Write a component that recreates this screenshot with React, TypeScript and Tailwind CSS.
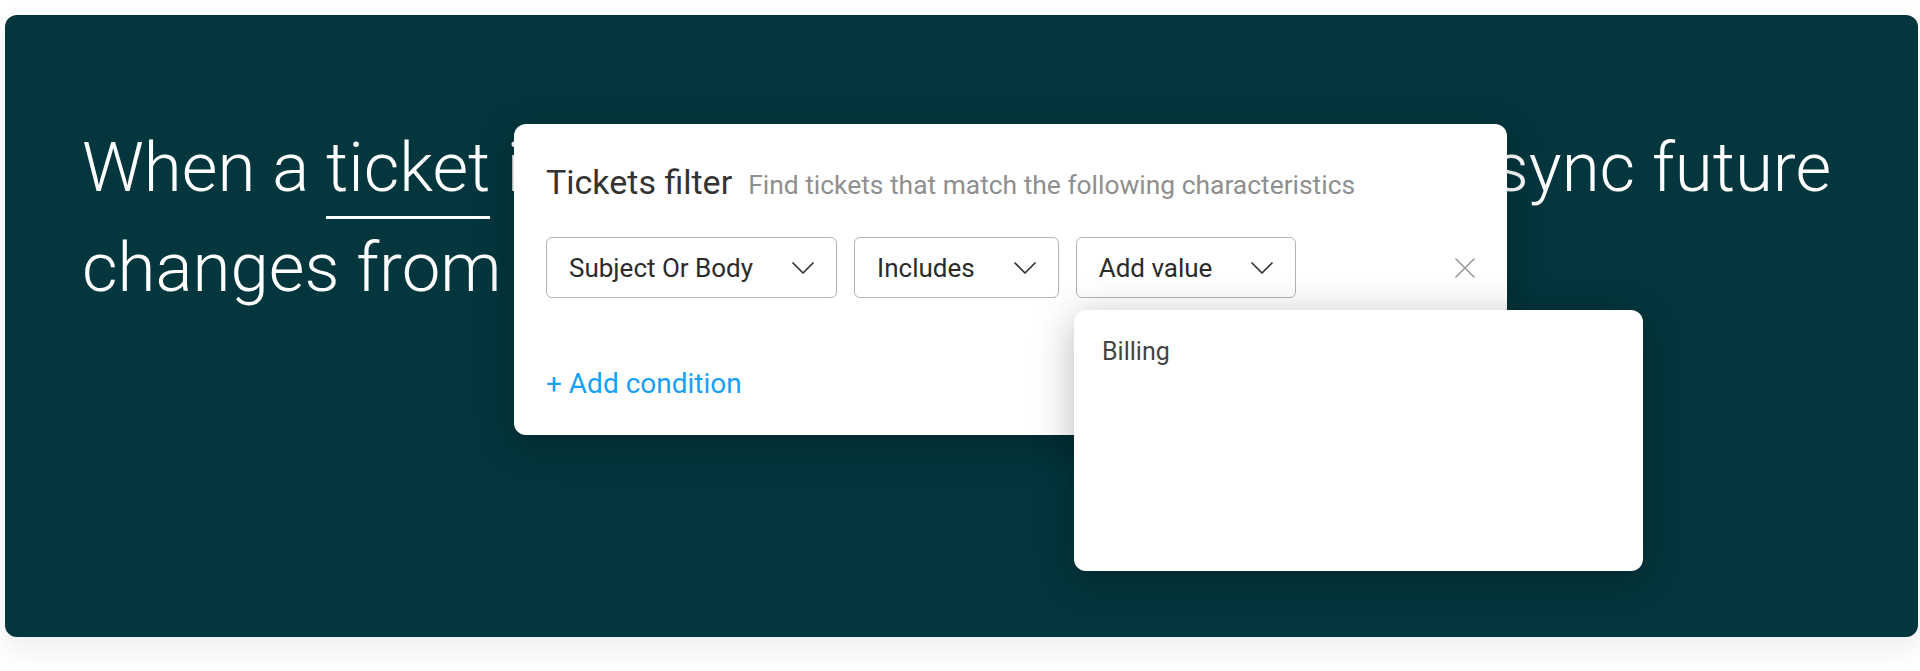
import React from 'react';

const font = { fontFamily: 'Roboto, "Noto Sans", sans-serif' };

const Chevron: React.FC = () => (
    <svg width="22" height="12" viewBox="0 0 22 12" fill="none" className="shrink-0">
        <path d="M1 1l10 10L21 1" stroke="#333" strokeWidth="1.7" strokeLinecap="round" strokeLinejoin="round" />
    </svg>
);

const Select: React.FC<{ label: string }> = ({ label }) => (
    <div className="flex h-[61px] items-center gap-[39px] rounded-[6px] border-[1.5px] border-[#b3b3b3] bg-white px-[22px]">
        <span className="text-[26px] leading-none text-[#2b2b2b]">{label}</span>
        <Chevron />
    </div>
);

export default function App() {
    return (
        <div className="min-h-screen bg-white pl-[5px] pr-[2px] pt-[15px]" style={font}>
            <div className="relative h-[622px] rounded-[12px] bg-[#03363d] pl-[77px] pt-[103px] shadow-[0_12px_30px_rgba(0,0,0,0.08)]">
                {/* Headline sentence (partly covered by the filter card) */}
                <h1 className="text-[69px] font-light leading-[100px] text-white whitespace-nowrap">
                    When a <span className="border-b-[3px] border-white pb-[8px]">ticket</span>
                    <span className="tracking-[-0.6px]"> is created, create a new item and </span>sync future
                    <br />
                    changes from Zendesk
                </h1>

                {/* Tickets filter card */}
                <div className="absolute left-[509px] top-[109px] flex h-[311px] w-[993px] flex-col rounded-[12px] bg-white pl-[32px] pr-[32px] pt-[41px] shadow-[0_10px_40px_rgba(0,0,0,0.25)]">
                    <div className="flex items-baseline gap-[16px]">
                        <span className="text-[34px] leading-none text-[#333]">Tickets filter</span>
                        <span className="text-[26.4px] leading-none text-[#8f8f8f]">Find tickets that match the following characteristics</span>
                    </div>

                    <div className="mt-[38px] flex items-center gap-[17px]">
                        <Select label="Subject Or Body" />
                        <Select label="Includes" />
                        <Select label="Add value" />
                        <button className="ml-auto flex h-[20px] w-[20px] items-center justify-center">
                            <svg width="20" height="20" viewBox="0 0 20 20" fill="none">
                                <path d="M1 1l18 18M19 1L1 19" stroke="#9a9a9a" strokeWidth="1.6" strokeLinecap="round" />
                            </svg>
                        </button>
                    </div>

                    <button className="mt-[72px] self-start text-[28px] leading-none text-[#18a0f7]">+ Add condition</button>
                </div>

                {/* Value dropdown menu */}
                <div className="absolute left-[1069px] top-[295px] h-[261px] w-[569px] rounded-[12px] bg-white pl-[28px] pt-[29px] shadow-[0_8px_40px_rgba(0,0,0,0.28)]">
                    <span className="text-[25px] leading-none text-[#444]">Billing</span>
                </div>
            </div>
        </div>
    );
}
